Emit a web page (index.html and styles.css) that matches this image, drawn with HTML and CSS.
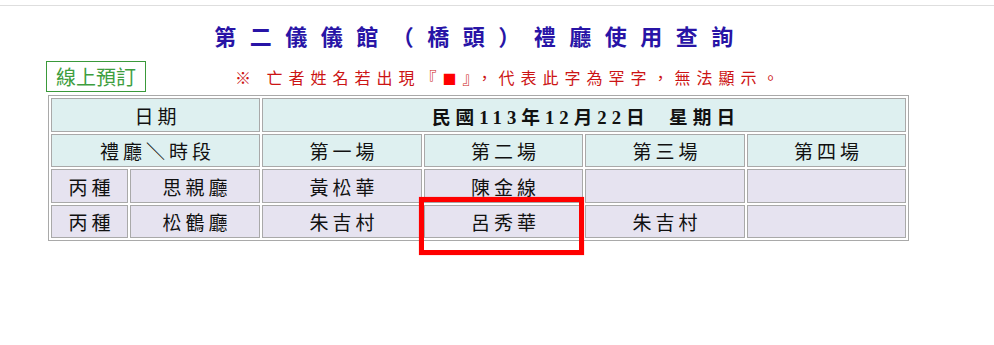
FILE: index.html
```html
<!DOCTYPE html>
<html lang="zh-Hant">
<head>
<meta charset="utf-8">
<title>第二儀儀館（橋頭）禮廳使用查詢</title>
<link rel="stylesheet" href="styles.css">
</head>
<body>
<div class="topline"></div>
<div class="page">
  <h1 class="title">第二儀儀館（橋頭）禮廳使用查詢</h1>
  <div class="bar">
    <a class="book" href="#">線上預訂</a>
    <p class="notice">※ 亡者姓名若出現『<span class="sq">■</span>』，代表此字為罕字，無法顯示。</p>
  </div>
  <div class="board">
    <div class="sched">
      <div class="cell head span2">日期</div>
      <div class="cell head span4 date">民國113年12月22日&nbsp;&nbsp;星期日</div>

      <div class="cell head span2">禮廳＼時段</div>
      <div class="cell head">第一場</div>
      <div class="cell head">第二場</div>
      <div class="cell head">第三場</div>
      <div class="cell head">第四場</div>

      <div class="cell">丙種</div>
      <div class="cell">思親廳</div>
      <div class="cell">黃松華</div>
      <div class="cell">陳金線</div>
      <div class="cell"></div>
      <div class="cell"></div>

      <div class="cell">丙種</div>
      <div class="cell">松鶴廳</div>
      <div class="cell">朱吉村</div>
      <div class="cell">呂秀華</div>
      <div class="cell">朱吉村</div>
      <div class="cell"></div>
    </div>
    <div class="mark"></div>
  </div>
</div>
</body>
</html>
```

FILE: styles.css
```css
html, body {
  margin: 0;
  padding: 0;
  background: #fff;
}

body {
  min-height: 345px;
  font-family: "Noto Sans CJK TC", "Noto Sans", sans-serif;
  color: #111;
}

.topline {
  margin-top: 5px;
  height: 1px;
  background: #dedede;
}

.page {
  margin-left: 48px;
  width: 861px;
}

.title {
  margin: 14px 0 0;
  padding-left: 4px;
  height: 30px;
  line-height: 30px;
  text-align: center;
  font-size: 22px;
  font-weight: bold;
  letter-spacing: 13.5px;
  color: #2814a6;
}

.bar {
  margin-top: 11px;
  display: flex;
  align-items: center;
}

.book {
  margin-left: -2px;
  box-sizing: border-box;
  width: 100px;
  height: 31px;
  border: 1px solid #3a993a;
  display: flex;
  align-items: center;
  justify-content: center;
  font-size: 20px;
  line-height: 29px;
  color: #3e9e3e;
  text-decoration: none;
}

.notice {
  margin: 2px 0 0 89px;
  font-size: 16px;
  line-height: 22px;
  letter-spacing: 6px;
  color: #cc1414;
}

.sq {
  color: #f00;
  font-size: 14px;
}

/* the bottom padding leaves room for the highlight box that hangs below the table */
.board {
  position: relative;
  margin-top: 3px;
  padding-bottom: 30px;
}

.sched {
  display: grid;
  grid-template-columns: 77px 130px 160px 159px 160px 159px;
  grid-template-rows: 34px 33px 34px 33px;
  gap: 2px;
  padding: 2px;
  border: 1px solid #a9a9a9;
  width: max-content;
}

.cell {
  box-sizing: border-box;
  border: 1px solid #a9a9a9;
  background: #e6e3f0;
  display: flex;
  align-items: center;
  justify-content: center;
  padding-left: 4px;
  font-size: 19px;
  letter-spacing: 4px;
  color: #111;
}

.head {
  background: #def0f0;
}

.span2 {
  grid-column: span 2;
}

.span4 {
  grid-column: span 4;
}

.date {
  font-family: "Liberation Serif", "Noto Sans CJK TC", serif;
  font-size: 18.7px;
  font-weight: bold;
  letter-spacing: 5px;
}

/* highlight box drawn over the 呂秀華 booking */
.mark {
  position: absolute;
  left: 371px;
  top: 102px;
  width: 165px;
  height: 58px;
  box-sizing: border-box;
  border: 5px solid #f00;
  box-shadow: 0 0 1px rgba(255, 0, 0, 0.5);
}
```
